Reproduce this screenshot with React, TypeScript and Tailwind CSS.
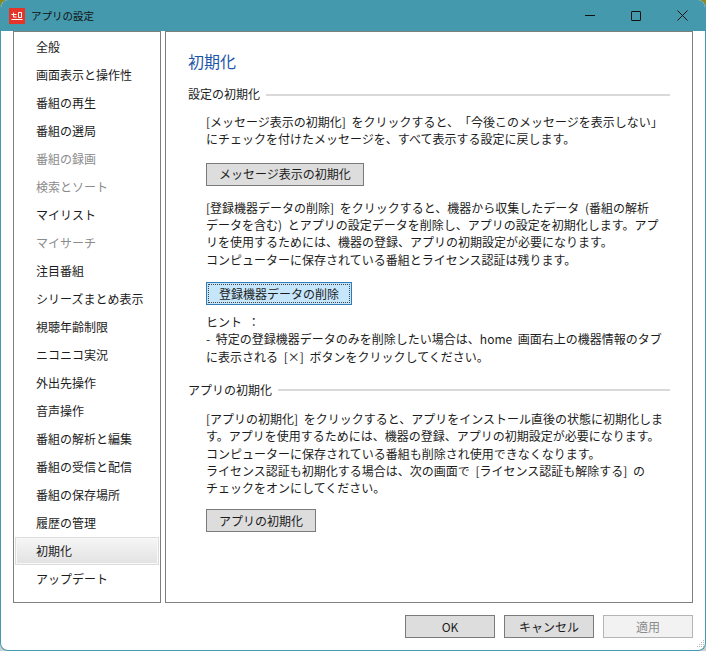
import React from "react";

const font = "font-['Noto_Sans_CJK_JP','Noto_Sans',sans-serif]";

const menuItems = [
  { label: "全般" },
  { label: "画面表示と操作性" },
  { label: "番組の再生" },
  { label: "番組の選局" },
  { label: "番組の録画", disabled: true },
  { label: "検索とソート", disabled: true },
  { label: "マイリスト" },
  { label: "マイサーチ", disabled: true },
  { label: "注目番組" },
  { label: "シリーズまとめ表示" },
  { label: "視聴年齢制限" },
  { label: "ニコニコ実況" },
  { label: "外出先操作" },
  { label: "音声操作" },
  { label: "番組の解析と編集" },
  { label: "番組の受信と配信" },
  { label: "番組の保存場所" },
  { label: "履歴の管理" },
  { label: "初期化", active: true },
  { label: "アップデート" },
];

const SectionTitle = ({ children }: { children: React.ReactNode }) => (
  <div className="flex h-[18px] items-center gap-[6px] pr-[22px]">
    <span className="whitespace-nowrap text-[12px] text-[#1c1c1c]">{children}</span>
    <div className="mt-px h-[2px] flex-1 bg-[#d9d9d9]" />
  </div>
);

const Paragraph = ({ lines }: { lines: string[] }) => (
  <div className="text-[12px] leading-[17.33px] whitespace-nowrap text-[#1c1c1c] [text-spacing-trim:space-all] [word-spacing:3px]">
    {lines.map((l) => (
      <div key={l}>{l}</div>
    ))}
  </div>
);

const Btn = ({ children, width, disabled }: { children: React.ReactNode; width: string; disabled?: boolean }) => (
  <div
    className={`flex h-[23px] items-center justify-center border text-[12px] ${width} ${
      disabled ? "border-[#b5b5b5] bg-[#f2f2f2] text-[#8c8c8c]" : "border-[#7a7a7a] bg-[#dddddd] text-[#1c1c1c]"
    }`}
  >
    {children}
  </div>
);

export default function App() {
  return (
    <div
      className={`${font} relative h-[651px] w-[706px] overflow-hidden bg-gradient-to-b from-[#8a8a20] from-5% to-[#c9d0d0] to-5%`}
    >
      <div className="flex h-full flex-col overflow-hidden rounded-[8px] border-x border-b border-[#4499ac] bg-white">
        {/* タイトルバー */}
        <div className="flex h-[31px] shrink-0 items-center bg-[#4499ac] pl-[8px]">
          <div className="flex h-[16px] w-[16px] items-center justify-center bg-[#e53528]">
            <svg width="12" height="10" viewBox="0 0 12 10" fill="none" stroke="#fff" strokeWidth="1">
              <path d="M0.500 3.500h5M2.500 1.500v4.500h3M7.500 1.500h3v5h-3zM0.500 8.500h11" />
            </svg>
          </div>
          <span className="ml-[6px] text-[10.500px] text-[#111]">アプリの設定</span>
          <div className="ml-auto flex items-center">
            <div className="flex h-[31px] w-[46px] items-center justify-center">
              <div className="h-px w-[10px] bg-[#111]" />
            </div>
            <div className="flex h-[31px] w-[46px] items-center justify-center">
              <div className="h-[10px] w-[10px] rounded-[1px] border border-[#111]" />
            </div>
            <div className="flex h-[31px] w-[46px] items-center justify-center">
              <svg width="11" height="11" viewBox="0 0 11 11" stroke="#111" strokeWidth="1">
                <path d="M0.500 0.500l10 10M10.500 0.500l-10 10" />
              </svg>
            </div>
          </div>
        </div>

        {/* 本体 */}
        <div className="flex h-[572px] shrink-0 gap-[4px] pl-[12px] pr-[12px]">
          <div className="w-[148px] border border-[#7f7f7f] px-px pt-px">
            {menuItems.map((item) => (
              <div
                key={item.label}
                className={`flex h-[28px] items-center text-[12px] ${
                  item.active
                    ? "border border-[#dcdcdc] bg-gradient-to-b from-[#f6f6f6] to-[#e2e2e2] pl-[20px] text-[#1c1c1c] shadow-[inset_0_0_0_1px_#f8f8f8]"
                    : item.disabled
                      ? "pl-[21px] text-[#8c8c8c]"
                      : "pl-[21px] text-[#1c1c1c]"
                }`}
              >
                {item.label}
              </div>
            ))}
          </div>

          <div className="flex-1 border border-[#7f7f7f] pl-[22px]">
            <h1 className="mt-[18px] h-[22px] text-[16px] leading-[22px] font-normal text-[#1b57a8]">初期化</h1>
            <div className="mt-[13px]">
              <SectionTitle>設定の初期化</SectionTitle>
            </div>
            <div className="mt-[10px] pl-[18px]">
              <Paragraph
                lines={[
                  "[メッセージ表示の初期化] をクリックすると、「今後このメッセージを表示しない」",
                  "にチェックを付けたメッセージを、すべて表示する設定に戻します。",
                ]}
              />
              <Btn width="w-[158px] mt-[15px]">メッセージ表示の初期化</Btn>
              <div className="mt-[13px]">
                <Paragraph
                  lines={[
                    "[登録機器データの削除] をクリックすると、機器から収集したデータ (番組の解析",
                    "データを含む) とアプリの設定データを削除し、アプリの設定を初期化します。アプ",
                    "リを使用するためには、機器の登録、アプリの初期設定が必要になります。",
                    "コンピューターに保存されている番組とライセンス認証は残ります。",
                  ]}
                />
              </div>
              <div className="mt-[14.5px] w-[146px] border border-[#2f7db8] bg-[#c6e6fb] p-px">
                <div className="flex h-[19px] items-center justify-center border border-dotted border-[#444] text-[12px] text-[#1c1c1c]">
                  登録機器データの削除
                </div>
              </div>
              <div className="mt-[7.5px]">
                <Paragraph
                  lines={[
                    "ヒント ：",
                    "-  特定の登録機器データのみを削除したい場合は、home 画面右上の機器情報のタブ",
                    "に表示される [×] ボタンをクリックしてください。",
                  ]}
                />
              </div>
            </div>
            <div className="mt-[16px]">
              <SectionTitle>アプリの初期化</SectionTitle>
            </div>
            <div className="mt-[11px] pl-[18px]">
              <Paragraph
                lines={[
                  "[アプリの初期化] をクリックすると、アプリをインストール直後の状態に初期化しま",
                  "す。アプリを使用するためには、機器の登録、アプリの初期設定が必要になります。",
                  "コンピューターに保存されている番組も削除され使用できなくなります。",
                  "ライセンス認証も初期化する場合は、次の画面で [ライセンス認証も解除する] の",
                  "チェックをオンにしてください。",
                ]}
              />
              <Btn width="w-[110px] mt-[12.5px]">アプリの初期化</Btn>
            </div>
          </div>
        </div>

        {/* フッター */}
        <div className="flex flex-1 justify-end gap-[9px] pr-[12px] pt-[12px]">
          <Btn width="w-[90px]">OK</Btn>
          <Btn width="w-[90px]">キャンセル</Btn>
          <Btn width="w-[90px]" disabled>
            適用
          </Btn>
        </div>
      </div>

      {/* リサイズグリップ */}
      <svg className="absolute right-[1px] bottom-[1px]" width="12" height="12" viewBox="0 0 12 12" fill="#b9b9b9">
        <rect x="10" y="2" width="1" height="1" />
        <rect x="8" y="4" width="1" height="1" />
        <rect x="10" y="4" width="1" height="1" />
        <rect x="6" y="6" width="1" height="1" />
        <rect x="8" y="6" width="1" height="1" />
        <rect x="10" y="6" width="1" height="1" />
        <rect x="4" y="8" width="1" height="1" />
        <rect x="6" y="8" width="1" height="1" />
        <rect x="8" y="8" width="1" height="1" />
        <rect x="10" y="8" width="1" height="1" />
      </svg>
    </div>
  );
}
